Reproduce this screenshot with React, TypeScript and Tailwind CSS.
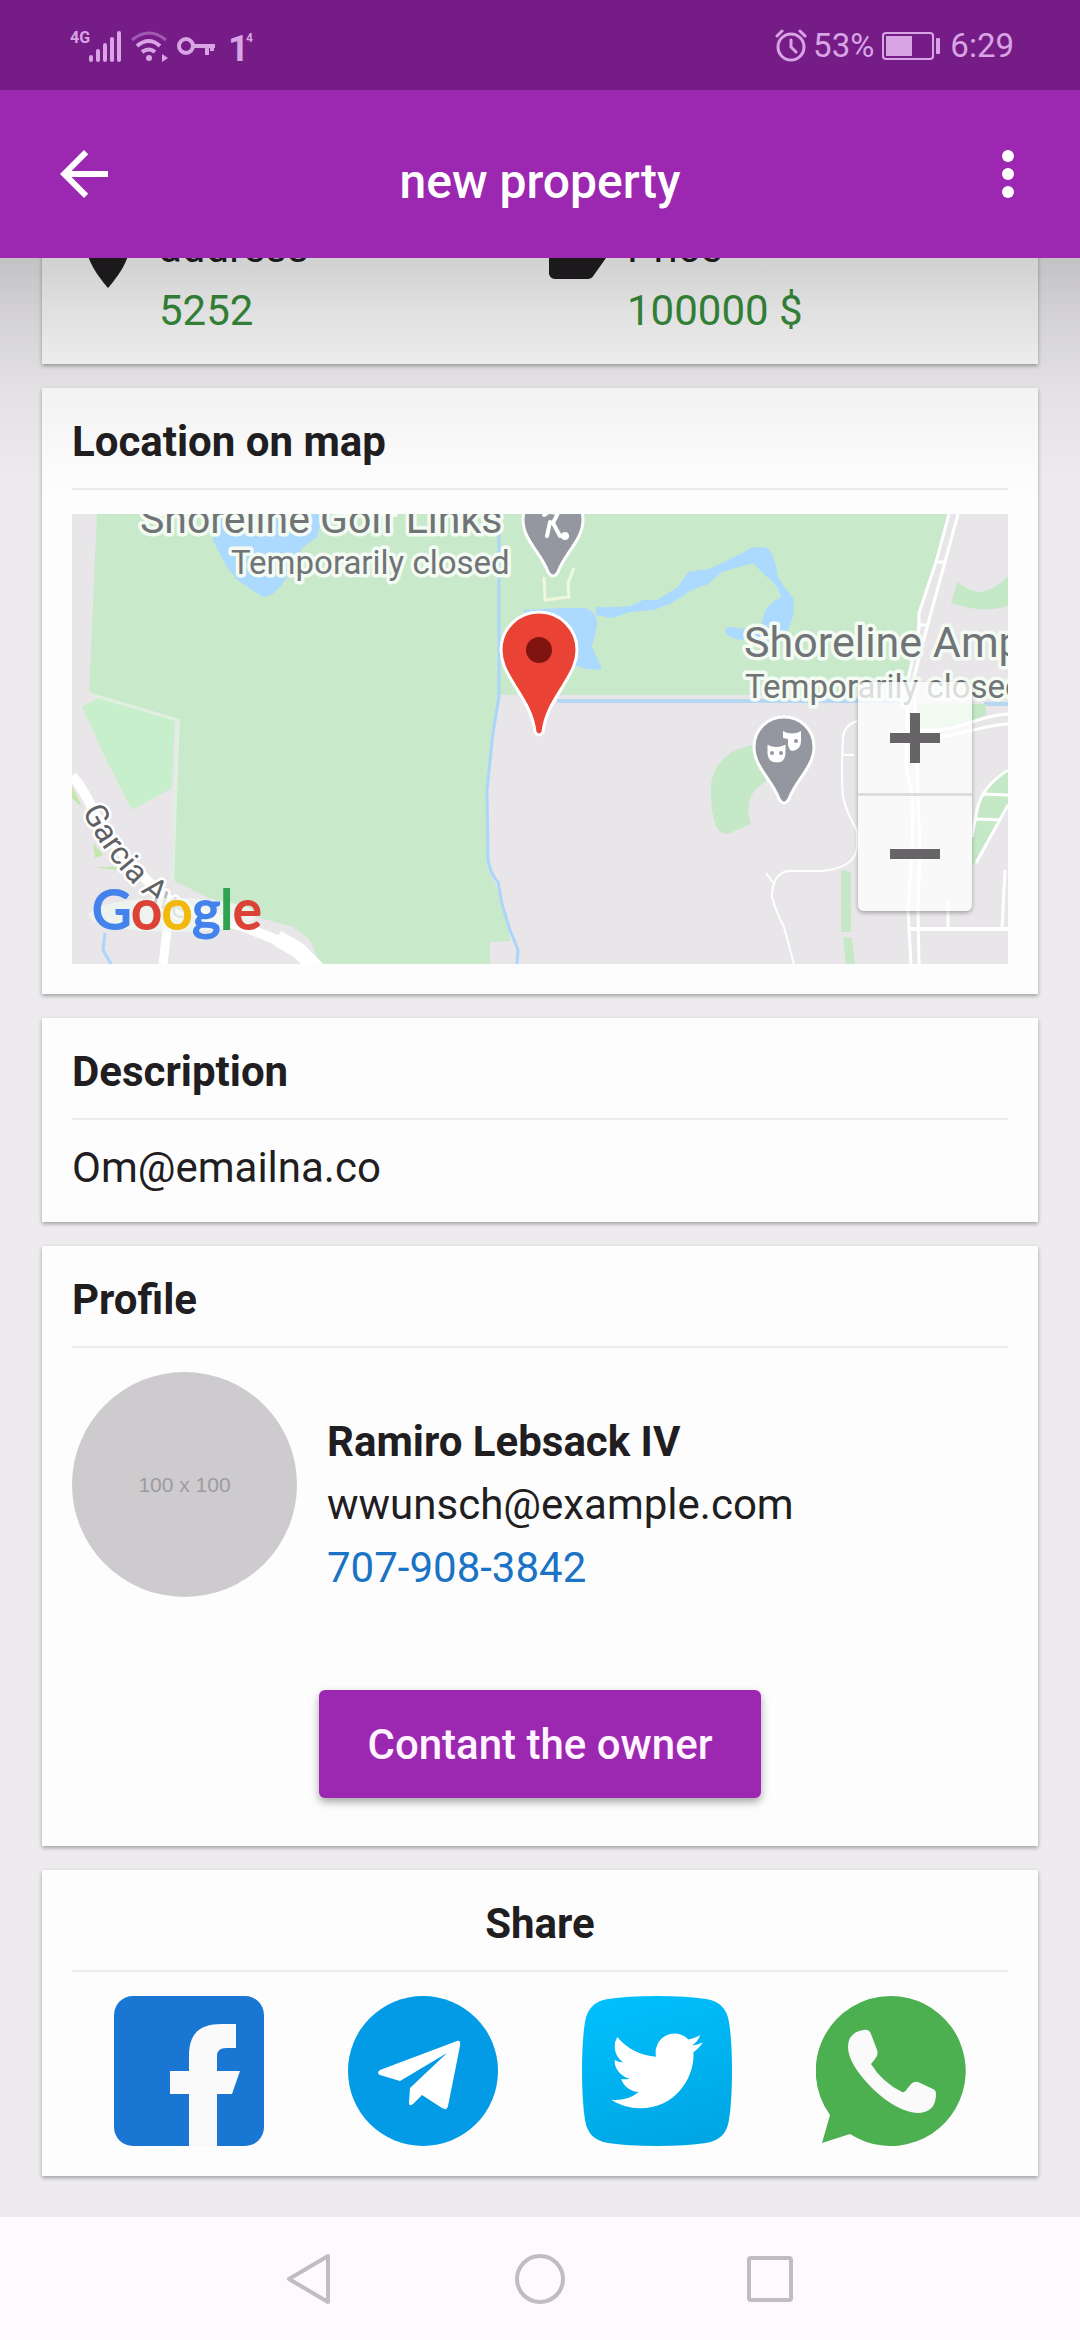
import type { ReactNode } from "react";

function Card({ title, center = false, className = "", children }: { title: string; center?: boolean; className?: string; children: ReactNode }) {
  return (
    <section className={`bg-[#fefdfe] px-[30px] shadow-[0_2px_4px_rgba(0,0,0,0.32)] ${className}`}>
      <h2 className={`mb-6 border-b-2 border-[#edebee] pt-6 pb-4 text-[42px] leading-[60px] font-bold ${center ? "text-center" : ""}`}>{title}</h2>
      {children}
    </section>
  );
}

function StatusBar() {
  return (
    <div className="flex h-[90px] items-center justify-between bg-[#751c87] px-[66px] pt-0.5 text-[#d8a4e4]">
      <div className="flex items-center">
        <svg width="200" height="40" viewBox="66 25 200 40" fill="none" stroke="currentColor" role="img" aria-label="4G, Wi-Fi, VPN">
          <text x="70" y="42" fontSize="16" fontWeight="700" fill="currentColor" stroke="none" className="font-[Roboto,sans-serif]">4G</text>
          <path d="M91 56v3M98 50v9M105 44v15M112 38v21M119 32v27" strokeWidth="4" strokeLinecap="round" />
          <path d="M132 39q17-14 34 0" strokeWidth="3" opacity="0.45" />
          <path d="M137 45q12-10 23 0M142 51q7-5 13 0" strokeWidth="4" />
          <circle cx="149" cy="57" r="3" fill="currentColor" stroke="none" />
          <path d="M162 53l6 4-6 4z" fill="currentColor" stroke="none" />
          <circle cx="186" cy="45" r="7" strokeWidth="4" />
          <path d="M193 45h22M207 45v9M212 45v5" strokeWidth="4" />
          <text x="228" y="60" fontSize="37" fontWeight="700" fill="currentColor" stroke="none" className="font-[Roboto,sans-serif]">1</text>
          <text x="246" y="41" fontSize="12" fontWeight="700" fill="currentColor" stroke="none" className="font-[Roboto,sans-serif]">4</text>
        </svg>
      </div>
      <div className="flex items-center text-[33px] leading-[40px]">
        <svg width="32" height="34" viewBox="0 0 32 34" fill="none" stroke="currentColor" strokeWidth="3" strokeLinecap="round" aria-hidden="true">
          <circle cx="16" cy="18" r="13" />
          <path d="M2 7l5-5M30 7l-5-5M16 11v7l5 5" />
        </svg>
        <span className="ml-1.5">53%</span>
        <svg className="mr-2 ml-2" width="60" height="28" viewBox="0 0 60 28" fill="none" aria-hidden="true">
          <rect x="1" y="1" width="50" height="26" rx="3" stroke="currentColor" strokeWidth="2" />
          <rect x="4" y="4" width="26" height="20" fill="currentColor" />
          <rect x="54" y="6" width="4" height="16" rx="1" fill="currentColor" />
        </svg>
        <span>6:29</span>
      </div>
    </div>
  );
}

function AppBar() {
  return (
    <div className="grid h-[168px] grid-cols-[1fr_auto_1fr] items-center bg-[#9c27b0] pr-9 pl-12 text-white">
      <button type="button" aria-label="Back" className="justify-self-start">
        <svg width="72" height="72" viewBox="0 0 24 24" fill="currentColor">
          <path d="M20 11H7.83l5.59-5.59L12 4l-8 8 8 8 1.41-1.41L7.83 13H20v-2z" />
        </svg>
      </button>
      <h1 className="pt-4 pr-3 text-[48px] leading-[60px] font-medium">new property</h1>
      <button type="button" aria-label="More options" className="justify-self-end">
        <svg width="72" height="72" viewBox="0 0 24 24" fill="currentColor">
          <circle cx="12" cy="6" r="2" />
          <circle cx="12" cy="12" r="2" />
          <circle cx="12" cy="18" r="2" />
        </svg>
      </button>
    </div>
  );
}

const pinShape = "M0-30C-17-30-30-17-30 0C-30 20-11 34-5 52Q0 60 5 52C11 34 30 20 30 0C30-17 17-30 0-30z";

const wordmark = [
  { letter: "G", color: "#4483ec" },
  { letter: "o", color: "#dc4337" },
  { letter: "o", color: "#f2b90c" },
  { letter: "g", color: "#4483ec" },
  { letter: "l", color: "#31a350" },
  { letter: "e", color: "#dc4337" },
];

function MapDrawing() {
  return (
    <svg className="block h-full w-full font-[Roboto,sans-serif]" viewBox="0 0 936 450" preserveAspectRatio="xMidYMid slice" fill="none" role="img" aria-label="Map">
      <rect width="936" height="450" fill="#e8e6e9" />
      <path fill="#c9e9cb" d="M25 0L17 178L108 206L101 366L135 383L185 403L221 413L238 426L248 450H418V428L438 427L436 406L428 379L416 356L415 276L421 219L427 183V181H832L847 99L877 0z" />
      <path fill="#c8efcb" d="M10 193L26 184L103 206L100 274L60 296L31 239z" />
      <path stroke="#e0efe0" strokeWidth="3" d="M17 180L106 206L101 366" />
      <path fill="#c3e8a8" d="M0 272L10 293L0 284zM21 329L31 341L23 344zM22 353H45V356z" />
      <path fill="#acd9fe" d="M141 0V26L155 53L165 66L191 83Q202 83 213 66L231 33L245 23L251 0z" />
      <path stroke="#acd5fc" strokeWidth="3" d="M427 20V183L421 219L415 276L416 345Q418 360 426 368L430 390L438 416L446 436L445 450M33 419L31 436L39 450" />
      <path fill="#acd9fe" d="M451 96L489 94H513Q526 98 525 112L520 133L530 154Q525 158 508 153L489 149L460 110z" />
      <path fill="#acd9fe" d="M524 93Q548 94 561 91L571 86H585L606 73L616 58L637 55L671 39L678 34Q690 32 697 35Q704 46 706 63Q712 74 721 84Q724 100 716 116L700 131L671 126Q654 124 653 117Q655 111 663 114L688 116L692 99Q696 90 709 83Q706 70 695 63L681 49L650 58L636 70L620 76L600 89L582 96L558 98L540 104L524 101z" />
      <path stroke="#b5d7f2" strokeWidth="4" d="M485 187H830M912 190H936" />
      <path stroke="#eff8da" strokeWidth="3" d="M472 63L473 86L497 83L496 69L502 54" />
      <path fill="#c5e9c6" d="M885 68Q898 78 910 78Q925 74 936 62V92Q910 100 879 89zM681 231Q645 237 639 270Q638 300 645 314Q650 322 658 319L679 310Q672 290 683 276L695 266zM769 356L779 358V418H769zM771 423L780 424L783 450H774zM936 254Q912 266 905 296L900 323V350L904 349L936 289zM846 190H914V201Q885 216 846 214z" />
      <g stroke="#fff" strokeWidth="3">
        <path d="M877 0L864 48L847 99V115L836 166L834 253L841 286L840 336L836 396L839 450M886 0L873 48L857 106L842 163L845 253L848 336L846 396L847 450" />
        <path d="M864 48H873M848 111H857" />
        <path d="M847 216C885 220 905 201 936 200M847 222C885 226 905 211 936 210" />
        <path d="M785 207Q771 212 771 225Q769 260 771 283Q775 300 785 316V333Q783 354 750 357H716Q700 360 700 383Q704 398 712 413L722 450M694 359L702 370M771 241H782" strokeWidth="2" />
        <path d="M936 256Q910 272 905 296L900 323M904 349L936 291M910 280L936 281M903 305L929 306M876 386V415M933 356L930 415" />
        <path d="M838 415H936" strokeWidth="4" />
      </g>
      <path stroke="#fff" strokeWidth="10" d="M0 262Q10 272 20 294T60 350T108 392T170 412L215 430" />
      <path stroke="#fff" strokeWidth="16" d="M205 424L226 436L246 456" />
      <path stroke="#fff" strokeWidth="9" d="M95 400V416L91 450" />

      <g fill="#717476" stroke="#f3fbf3" strokeWidth="7" strokeLinejoin="round" paintOrder="stroke">
        <text x="68" y="19" fontSize="41">Shoreline Golf Links</text>
        <text x="159" y="60" fontSize="33">Temporarily closed</text>
        <text x="672" y="143" fontSize="43">Shoreline Amp</text>
        <text x="673" y="184" fontSize="33">Temporarily closed</text>
      </g>

      <path id="garcia" d="M10 297Q32 341 62 371T122 410" />
      <text fontSize="32" fill="#606163" stroke="#fff" strokeWidth="5" strokeLinejoin="round" paintOrder="stroke">
        <textPath href="#garcia">Garcia A<tspan fill="#b9babc">ve</tspan></textPath>
      </text>

      <g transform="translate(481 6)">
        <path d={pinShape} fill="#9496a0" stroke="#fff" strokeWidth="3" />
        <path d="M-3-8L5-7L0 3L7 16M-3 2L-6 16M-9-5L-3-9M5-7L2-12" stroke="#fff" strokeWidth="4" strokeLinecap="round" strokeLinejoin="round" />
        <circle cx="12" cy="16" r="4" fill="#fff" />
      </g>
      <g transform="translate(712 233)">
        <path d={pinShape} fill="#9496a0" stroke="#fff" strokeWidth="3" />
        <path d="M-1-16Q8-11 17-16V-6Q17 3 8 4Q3 2 4-8L-1-9z" fill="#fff" />
        <path d="M-17-3Q-8 2 2-3V7Q1 16-7 16Q-16 16-17 7z" fill="#fff" stroke="#9496a0" strokeWidth="1" />
        <circle cx="-12" cy="6" r="2" fill="#9496a0" />
        <circle cx="-3" cy="6" r="2" fill="#9496a0" />
        <circle cx="12" cy="-6" r="2" fill="#9496a0" />
      </g>
      <g transform="translate(467 136)">
        <path d="M0-38C-21-38-38-21-38 0C-38 14-31 24-24 36C-14 52-6 64-4 82Q0 88 4 82C6 64 14 52 24 36C31 24 38 14 38 0C38-21 21-38 0-38z" fill="#ea4335" stroke="#fff" strokeWidth="3" />
        <circle r="13" fill="#811411" />
      </g>

      <ellipse cx="101" cy="401" rx="84" ry="17" fill="#f1f8f1" opacity="0.7" />
      <text x="20" y="415" fontSize="54" strokeWidth="2" className="font-[Lato,sans-serif]">
        {wordmark.map(({ letter, color }, i) => (
          <tspan key={i} fill={color} stroke={color}>{letter}</tspan>
        ))}
      </text>
    </svg>
  );
}

function FacebookLogo() {
  return (
    <svg width="150" height="150" viewBox="0 0 150 150" aria-hidden="true">
      <rect width="150" height="150" rx="19" fill="#1976d2" />
      <path fill="#fafafa" d="M75 150V98H56V75H75V60C75 38 85 28 108 28H122V52H112Q103 52 103 60V75H126L118 98H103V150z" />
    </svg>
  );
}

function TelegramLogo() {
  return (
    <svg width="150" height="150" viewBox="0 0 150 150" aria-hidden="true">
      <circle cx="75" cy="75" r="75" fill="#039be5" />
      <path fill="#fff" d="M109 45Q113 44 112 50L100 110Q99 115 94 112L74 99L65 108Q61 111 61 107L62 92L99 57L52 85L32 79Q28 77 32 74z" />
    </svg>
  );
}

function TwitterLogo() {
  return (
    <svg width="150" height="150" viewBox="0 0 150 150" aria-hidden="true">
      <defs>
        <linearGradient id="sky" x1="0.3" y1="0" x2="0.6" y2="1">
          <stop offset="0" stopColor="#00bffc" />
          <stop offset="1" stopColor="#00a6e4" />
        </linearGradient>
      </defs>
      <path fill="url(#sky)" d="M75 0Q105 0 124 3Q144 6 147 26Q150 45 150 75T147 124Q144 144 124 147Q105 150 75 150T26 147Q6 144 3 124Q0 105 0 75T3 26Q6 6 26 3Q45 0 75 0z" />
      <path fill="#fff" transform="translate(29 29) scale(3.83)" d="M23.953 4.57a10 10 0 01-2.825.775 4.958 4.958 0 002.163-2.723c-.951.555-2.005.959-3.127 1.184a4.92 4.92 0 00-8.384 4.482C7.69 8.095 4.067 6.13 1.64 3.162a4.822 4.822 0 00-.666 2.475c0 1.71.87 3.213 2.188 4.096a4.904 4.904 0 01-2.228-.616v.06a4.923 4.923 0 003.946 4.827 4.996 4.996 0 01-2.212.085 4.936 4.936 0 004.604 3.417 9.867 9.867 0 01-6.102 2.105c-.39 0-.779-.023-1.17-.067a13.995 13.995 0 007.557 2.209c9.053 0 13.998-7.496 13.998-13.985 0-.21 0-.42-.015-.63A9.935 9.935 0 0024 4.59z" />
    </svg>
  );
}

function WhatsappLogo() {
  return (
    <svg width="150" height="150" viewBox="0 0 150 150" aria-hidden="true">
      <path fill="#4caf50" d="M75 0a75 75 0 1 1-41 138L6 147L14 119A75 75 0 0 1 75 0z" />
      <path fill="#fafafa" d="M48 34Q53 33 55 38L61 54Q63 58 59 63L55 68Q66 86 86 96Q89 97 91 93L95 88Q98 85 102 86L117 93Q120 94 120 98Q120 117 101 117Q80 115 57 93Q32 68 32 51Q32 36 48 34z" />
    </svg>
  );
}

const shareTargets = [
  { name: "Facebook", Logo: FacebookLogo },
  { name: "Telegram", Logo: TelegramLogo },
  { name: "Twitter", Logo: TwitterLogo },
  { name: "WhatsApp", Logo: WhatsappLogo },
];

const facts = [
  { label: "address", value: "5252", icon: "M12 2C8.13 2 5 5.13 5 9c0 5.25 7 13 7 13s7-7.75 7-13c0-3.87-3.13-7-7-7z" },
  { label: "Price", value: "100000 $", icon: "M17.63 5.84C17.27 5.33 16.67 5 16 5L5 5.01C3.9 5.01 3 5.9 3 7v10c0 1.1.9 1.99 2 1.99L16 19c.67 0 1.27-.33 1.63-.84L22 12z" },
];

export default function App() {
  return (
    <div className="flex min-h-screen flex-col bg-[#edebee] font-[Roboto,sans-serif] text-[#211e22]">
      <header className="sticky top-0 z-10">
        <StatusBar />
        <AppBar />
        <div className="pointer-events-none absolute top-full right-0 left-0 h-[240px] bg-[linear-gradient(to_bottom,rgba(0,0,0,0.175),rgba(0,0,0,0.115)_22%,rgba(0,0,0,0.065)_44%,rgba(0,0,0,0.04)_58%,rgba(0,0,0,0.01)_84%,transparent)]" />
      </header>

      <main className="-mt-[60px] flex flex-1 flex-col gap-6 px-[42px] pb-[41px]">
        <section className="grid grid-cols-2 bg-[#fefdfe] px-[30px] pt-[18px] pb-[22px] text-[42px] leading-[63px] shadow-[0_2px_4px_rgba(0,0,0,0.32)]">
          {facts.map((fact) => (
            <div key={fact.label} className="flex items-start gap-[15px]">
              <svg className="mt-1.5" width="72" height="72" viewBox="0 0 24 24" fill="#211e22" aria-hidden="true">
                <path d={fact.icon} />
              </svg>
              <dl>
                <dt>{fact.label}</dt>
                <dd className="text-[#388e3c]">{fact.value}</dd>
              </dl>
            </div>
          ))}
        </section>

        <Card title="Location on map" className="pb-[30px]">
          <div className="relative h-[450px] overflow-hidden">
            <MapDrawing />
            <div className="absolute right-9 bottom-[53px] w-[114px] divide-y-3 divide-[#dedcdf] rounded-md bg-white/75 text-[#666467] shadow-[0_2px_4px_rgba(0,0,0,0.3)]">
              <button type="button" aria-label="Zoom in" className="flex h-[114px] w-full items-center justify-center">
                <svg width="50" height="50" viewBox="0 0 50 50" fill="currentColor"><path d="M20 0h10v20h20v10H30v20H20V30H0V20h20z" /></svg>
              </button>
              <button type="button" aria-label="Zoom out" className="flex h-[115px] w-full items-center justify-center">
                <svg width="50" height="10" viewBox="0 0 50 10" fill="currentColor"><path d="M0 0h50v10H0z" /></svg>
              </button>
            </div>
          </div>
        </Card>

        <Card title="Description" className="pb-[30px]">
          <p className="text-[42px] leading-[48px]">Om@emailna.co</p>
        </Card>

        <Card title="Profile" className="pb-12">
          <div className="flex items-start gap-[30px]">
            <div className="flex size-[225px] shrink-0 items-center justify-center rounded-full bg-[#cdcbce] font-[Liberation_Sans,sans-serif] text-[21px] text-[#9d9b9e]">100 x 100</div>
            <div className="pt-[38px] text-[42px] leading-[63px]">
              <p className="font-bold">Ramiro Lebsack IV</p>
              <p>wwunsch@example.com</p>
              <a href="tel:707-908-3842" className="block text-[#1a73c4]">707-908-3842</a>
            </div>
          </div>
          <div className="flex justify-center pt-[91px]">
            <button type="button" className="h-[108px] rounded-md bg-[#9c27b0] px-12 text-[42px] font-medium text-[#fff4ff] shadow-[0_4px_8px_rgba(0,0,0,0.35)]">Contant the owner</button>
          </div>
        </Card>

        <Card title="Share" center className="pb-[30px]">
          <div className="grid grid-cols-4">
            {shareTargets.map(({ name, Logo }) => (
              <a key={name} href="#" aria-label={`Share on ${name}`} className="flex justify-center">
                <Logo />
              </a>
            ))}
          </div>
        </Card>
      </main>

      <nav className="flex h-[123px] items-center justify-center bg-[#fcfafd] text-[#bfbdc0]" aria-label="System navigation">
        <button type="button" aria-label="Back" className="flex w-[230px] justify-center">
          <svg width="50" height="52" viewBox="0 0 50 52" fill="none" stroke="currentColor" strokeWidth="4" strokeLinejoin="round"><path d="M43 3v46L4 26z" /></svg>
        </button>
        <button type="button" aria-label="Home" className="flex w-[230px] justify-center">
          <svg width="52" height="52" viewBox="0 0 52 52" fill="none" stroke="currentColor" strokeWidth="4"><circle cx="26" cy="26" r="23" /></svg>
        </button>
        <button type="button" aria-label="Recent apps" className="flex w-[230px] justify-center">
          <svg width="48" height="48" viewBox="0 0 48 48" fill="none" stroke="currentColor" strokeWidth="4"><rect x="3" y="3" width="42" height="42" rx="2" /></svg>
        </button>
      </nav>
    </div>
  );
}
